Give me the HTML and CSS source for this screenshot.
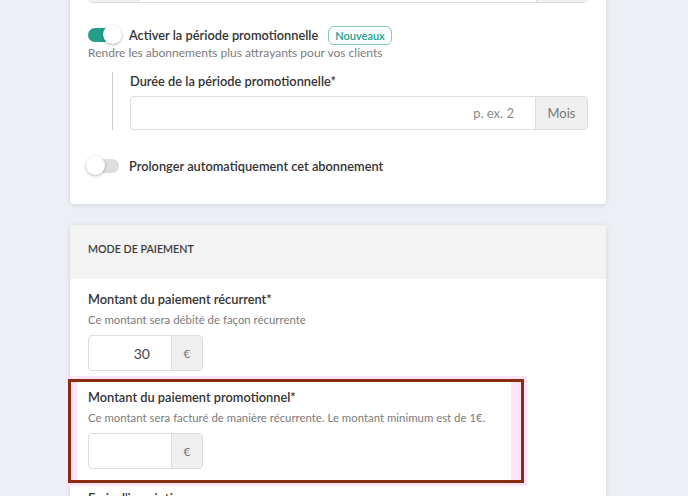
FILE: index.html
```html
<!DOCTYPE html>
<html lang="fr">
<head>
  <meta charset="UTF-8">
  <meta name="viewport" content="width=device-width, initial-scale=1">
  <title>Abonnement</title>
  <link rel="stylesheet" href="styles.css">
</head>
<body>

  <div class="page">

    <div class="card">
      <div class="card-body">
        <div class="input-group">
          <span class="addon addon-left"></span>
          <span class="field"></span>
          <span class="addon addon-right"></span>
        </div>

        <div class="toggle-row first">
          <span class="toggle on"><span class="knob"></span></span>
          <span class="toggle-label">Activer la période promotionnelle</span>
          <span class="badge">Nouveaux</span>
        </div>
        <p class="help">Rendre les abonnements plus attrayants pour vos clients</p>

        <div class="nested">
          <label class="label">Durée de la période promotionnelle*</label>
          <div class="input-group wide">
            <span class="field placeholder">p. ex. 2</span>
            <span class="addon addon-mois">Mois</span>
          </div>
        </div>

        <div class="toggle-row second">
          <span class="toggle off"><span class="knob"></span></span>
          <span class="toggle-label">Prolonger automatiquement cet abonnement</span>
        </div>
      </div>
    </div>

    <div class="card">
      <div class="card-header">MODE DE PAIEMENT</div>
      <div class="card-body payment">
        <label class="label">Montant du paiement récurrent*</label>
        <p class="help small">Ce montant sera débité de façon récurrente</p>
        <div class="input-group small-group">
          <span class="field value">30</span>
          <span class="addon addon-euro">€</span>
        </div>

        <div class="highlight">
          <div class="highlight-box">
            <label class="label">Montant du paiement promotionnel*</label>
            <p class="help small">Ce montant sera facturé de manière récurrente. Le montant minimum est de 1€.</p>
            <div class="input-group small-group">
              <span class="field value"></span>
              <span class="addon addon-euro">€</span>
            </div>
          </div>
        </div>

        <label class="label next">Frais d'inscription</label>
      </div>
    </div>

  </div>

</body>
</html>
```

FILE: styles.css
```css
:root {
  --green: #229e89;
  --text: #333333;
  --muted: #7b7b7b;
  --border: #dcdcdc;
  --addon: #efefef;
  --page-bg: #eceff4;
  --semi: 'Lato Semibold', 'Lato', 'Noto Sans', sans-serif;
}

* {
  box-sizing: border-box;
  margin: 0;
  padding: 0;
}

body {
  background-color: var(--page-bg);
  font-family: 'Lato', 'Noto Sans', sans-serif;
  color: var(--text);
  height: 496px;
  overflow: hidden;
}

.page {
  margin-top: -49px;
  margin-left: 70px;
  width: 536px;
  display: flex;
  flex-direction: column;
  gap: 21px;
}

.card {
  background: #fff;
  border-radius: 4px;
  box-shadow: 0 1px 5px rgba(40, 50, 70, 0.14);
}

.card-body {
  padding: 18px 18px 29px;
}

.card-header {
  background: #f3f3f3;
  height: 54px;
  padding: 0 18px 8px;
  display: flex;
  align-items: center;
  font-family: var(--semi);
  font-size: 10.7px;
  color: #3a3a3a;
  border-radius: 4px 4px 0 0;
}

/* input groups */
.input-group {
  display: flex;
  height: 34px;
  border: 1px solid var(--border);
  border-radius: 4px;
  overflow: hidden;
  background: #fff;
}

.field {
  flex: 1;
  display: flex;
  align-items: center;
  justify-content: flex-end;
  padding-right: 21px;
  font-size: 13px;
}

.addon {
  background: var(--addon);
  display: flex;
  align-items: center;
  justify-content: center;
  color: #777;
  font-size: 13px;
}

.addon-left {
  width: 50px;
  border-right: 1px solid var(--border);
}

.addon-right {
  width: 51px;
  border-left: 1px solid var(--border);
}

.addon-mois {
  width: 52px;
  border-left: 1px solid var(--border);
}

.placeholder {
  color: #8a8a8a;
}

.small-group {
  width: 115px;
  height: 36px;
}

.small-group .field {
  padding-right: 21px;
  font-size: 14px;
  color: #444;
}

.addon-euro {
  width: 31px;
  border-left: 1px solid var(--border);
  font-size: 12px;
}

/* toggles */
.toggle-row {
  display: flex;
  align-items: center;
  height: 18px;
}

.toggle-row.first {
  margin-top: 23px;
}

.toggle-row.second {
  margin-top: 27px;
}

.toggle {
  position: relative;
  width: 32px;
  height: 14px;
  border-radius: 7px;
  margin-right: 9px;
}

.toggle.on {
  background: var(--green);
}

.toggle.off {
  background: #dedede;
  width: 30px;
  margin-left: 1px;
  margin-right: 10px;
}

.knob {
  position: absolute;
  top: -3px;
  width: 19px;
  height: 19px;
  border-radius: 50%;
  background: #fff;
  box-shadow: 0 1px 3px rgba(0, 0, 0, 0.3);
}

.toggle.on .knob {
  right: -2px;
}

.toggle.off .knob {
  left: -3px;
}

.toggle-label {
  font-family: var(--semi);
  font-size: 12.8px;
  color: var(--text);
}

.badge {
  margin-left: 10px;
  font-family: var(--semi);
  font-size: 11px;
  color: var(--green);
  border: 1px solid #7fcbbd;
  border-radius: 6px;
  padding: 2px 6px;
  line-height: 13px;
}

.help {
  font-size: 12px;
  color: var(--muted);
  line-height: 17px;
}

.help.small {
  font-size: 11.4px;
  margin-top: 3px;
}

.nested {
  margin: 11px 0 0 24px;
  padding-left: 17px;
  border-left: 1px solid #cfcfcf;
}

.label {
  display: block;
  font-family: var(--semi);
  font-size: 12.8px;
  line-height: 18px;
  margin-bottom: 6px;
}

.payment {
  padding-top: 11px;
}

.payment > .label {
  margin-bottom: 0;
}

.help.small + .input-group {
  margin-top: 7px;
}

/* annotated area */
.highlight {
  margin: 5px 0 0 -23px;
  width: 462px;
  border: 3px solid #fde4f8;
}

.highlight-box {
  border: 3px solid #8b2d0d;
  box-shadow: inset 6px 0 0 #fde4f8, inset -10px 0 0 #fde4f8;
  padding: 6px 17px 11px;
}

.highlight-box .label {
  margin-bottom: 0;
}

.next {
  margin-top: 3px;
}
```
